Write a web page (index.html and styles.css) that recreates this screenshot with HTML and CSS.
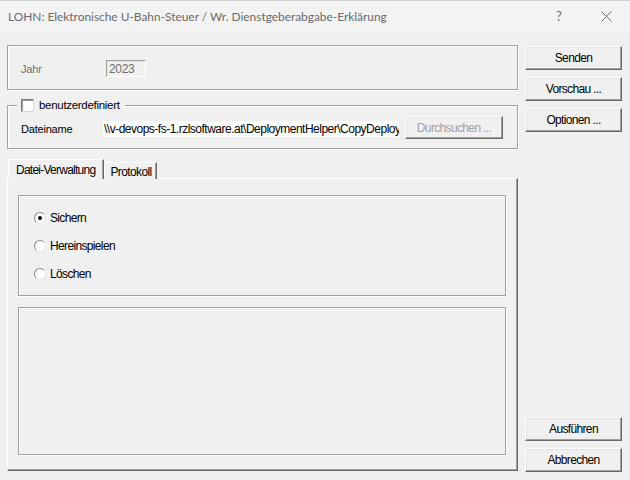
FILE: index.html
```html
<!DOCTYPE html>
<html lang="de">
<head>
<meta charset="utf-8">
<title>LOHN</title>
<link rel="stylesheet" href="styles.css">
</head>
<body>
<div class="window">
  <div class="titlebar">
    <span class="title">LOHN: Elektronische U-Bahn-Steuer / Wr. Dienstgeberabgabe-Erklärung</span>
    <span class="tb-btn">?</span>
    <span class="tb-btn close">
      <svg width="11" height="11" viewBox="0 0 11 11"><path d="M0.5 0.5 L10.5 10.5 M10.5 0.5 L0.5 10.5" stroke="#6e6e6e" stroke-width="1" fill="none"/></svg>
    </span>
  </div>
  <div class="body">
    <div class="main">
      <div class="group g1">
        <span class="lbl disabled">Jahr</span>
        <span class="field">2023</span>
      </div>
      <div class="group g2">
        <span class="legend"><span class="check"></span>benutzerdefiniert</span>
        <span class="lbl">Dateiname</span>
        <span class="path">\\v-devops-fs-1.rzlsoftware.at\DeploymentHelper\CopyDeploym</span>
        <span class="btn browse">Durchsuchen ...</span>
      </div>
      <div class="tabs">
        <div class="tablist">
          <span class="tab active">Datei-Verwaltung</span>
          <span class="tab">Protokoll</span>
        </div>
        <div class="panel">
          <div class="inner radios">
            <div class="radio-row"><span class="radio on"></span>Sichern</div>
            <div class="radio-row"><span class="radio"></span>Hereinspielen</div>
            <div class="radio-row"><span class="radio"></span>Löschen</div>
          </div>
          <div class="inner log"></div>
        </div>
      </div>
    </div>
    <div class="side">
      <span class="btn">Senden</span>
      <span class="btn">Vorschau ...</span>
      <span class="btn">Optionen ...</span>
      <span class="spacer"></span>
      <span class="btn">Ausführen</span>
      <span class="btn">Abbrechen</span>
    </div>
  </div>
</div>
</body>
</html>
```

FILE: styles.css
```css
* { box-sizing: border-box; }
html, body { margin: 0; padding: 0; }
body {
  width: 630px;
  height: 480px;
  overflow: hidden;
  background: #f0f0f0;
  font-family: "Liberation Sans", Arial, sans-serif;
  font-size: 11px;
  color: #000;
}
.window {
  width: 630px;
  height: 480px;
  display: flex;
  flex-direction: column;
  background: #f0f0f0;
  border-top: 1px solid #cfcfcf;
}
.titlebar {
  height: 30px;
  display: flex;
  align-items: center;
  background: #f3f3f3;
  padding-left: 8px;
}
.title {
  flex: 1;
  font-family: "Lato", "Noto Sans", sans-serif;
  font-size: 11.9px;
  color: #6a6a6a;
  padding-top: 1px;
}
.tb-btn {
  width: 46px;
  display: flex;
  justify-content: center;
  align-items: center;
  font-family: "Lato", sans-serif;
  font-size: 13px;
  color: #707070;
}
.tb-btn.close { width: 48px; }

.body {
  flex: 1;
  display: flex;
  padding: 14px 0 0 7px;
  gap: 7px;
}
.main {
  width: 511px;
  display: flex;
  flex-direction: column;
}
.group {
  position: relative;
  border: 1px solid #a0a0a0;
  box-shadow: 1px 1px 0 #fff, inset 1px 1px 0 #fff;
  display: flex;
  align-items: center;
  padding-left: 13px;
}
.g1 { height: 45px; padding-top: 2px; }
.g2 { height: 44px; margin-top: 15px; padding-top: 3px; }
.lbl { width: 85px; flex: none; letter-spacing: -0.2px; }
.g2 .lbl { width: 83px; }
.disabled { color: #6d6d6d; }
.field {
  width: 40px;
  height: 17px;
  display: flex;
  align-items: center;
  padding-left: 2px;
  color: #6d6d6d;
  font-size: 12px;
  letter-spacing: -0.3px;
  border: 1px solid;
  border-color: #a0a0a0 #ffffff #ffffff #a0a0a0;
  box-shadow: inset 1px 1px 0 #e3e3e3;
}
.legend {
  position: absolute;
  left: 9px;
  top: -8px;
  padding: 0 5px 0 4px;
  background: #f0f0f0;
  display: flex;
  align-items: center;
  gap: 5px;
  font-size: 11.5px;
  letter-spacing: -0.3px;
  height: 14px;
}
.check {
  width: 13px;
  height: 13px;
  background: #fff;
  border: 1px solid;
  border-color: #7a7a7a #d8d8d8 #d8d8d8 #7a7a7a;
  box-shadow: inset 1px 1px 0 #a0a0a0;
}
.path {
  width: 296px;
  height: 16px;
  background: #fff;
  white-space: nowrap;
  overflow: hidden;
  font-size: 12px;
  letter-spacing: -0.5px;
  line-height: 16px;
  padding-left: 1px;
  margin-left: -1px;
}
.btn {
  height: 24px;
  width: 97px;
  display: flex;
  align-items: center;
  justify-content: center;
  background: #f0f0f0;
  border: 1px solid;
  border-color: #ffffff #696969 #696969 #ffffff;
  box-shadow: inset -1px -1px 0 #a0a0a0, inset 1px 1px 0 #e3e3e3;
  font-size: 12px;
  letter-spacing: -0.65px;
  flex: none;
}
.browse {
  width: 98px;
  height: 23px;
  margin-left: 6px;
  color: #a0a0a0;
  margin-top: -2px;
}
.tabs {
  margin-top: 10px;
  display: flex;
  flex-direction: column;
  flex: none;
}
.tablist {
  display: flex;
  align-items: flex-end;
  height: 20px;
  padding-left: 1px;
  position: relative;
  z-index: 1;
  margin-bottom: -1px;
}
.tab {
  height: 17px;
  padding: 1px 4px 0 5px;
  display: flex;
  align-items: center;
  border: 1px solid;
  border-bottom: none;
  border-color: #ffffff #696969 transparent #ffffff;
  box-shadow: inset -1px 0 0 #a0a0a0;
  font-size: 12px;
  letter-spacing: -0.6px;
  background: #f0f0f0;
}
.tab.active {
  height: 20px;
  padding: 1px 8px 1px 7px;
  border-right: 1px solid #696969;
  letter-spacing: -0.75px;
}
.panel {
  height: 293px;
  border: 1px solid;
  border-color: #ffffff #696969 #696969 #ffffff;
  box-shadow: inset -1px -1px 0 #a0a0a0;
  padding: 16px 11px 0 10px;
  display: flex;
  flex-direction: column;
  gap: 11px;
}
.inner {
  border: 1px solid #a0a0a0;
  box-shadow: 1px 1px 0 #fff, inset 1px 1px 0 #fff;
}
.radios {
  height: 101px;
  display: flex;
  flex-direction: column;
  padding: 15px 0 0 15px;
  gap: 15px;
}
.radio-row {
  display: flex;
  align-items: center;
  gap: 4px;
  height: 13px;
  font-size: 12px;
  letter-spacing: -0.65px;
}
.radio {
  width: 12px;
  height: 12px;
  border-radius: 50%;
  background: #fff;
  border: 1px solid;
  border-color: #8a8a8a #e6e6e6 #e6e6e6 #8a8a8a;
  display: flex;
  align-items: center;
  justify-content: center;
}
.radio.on::after {
  content: "";
  width: 4px;
  height: 4px;
  border-radius: 50%;
  background: #000;
}
.log { height: 148px; }

.side {
  width: 97px;
  display: flex;
  flex-direction: column;
  gap: 7px;
  padding-top: 1px;
  padding-bottom: 8px;
}
.spacer { flex: 1; }
```
